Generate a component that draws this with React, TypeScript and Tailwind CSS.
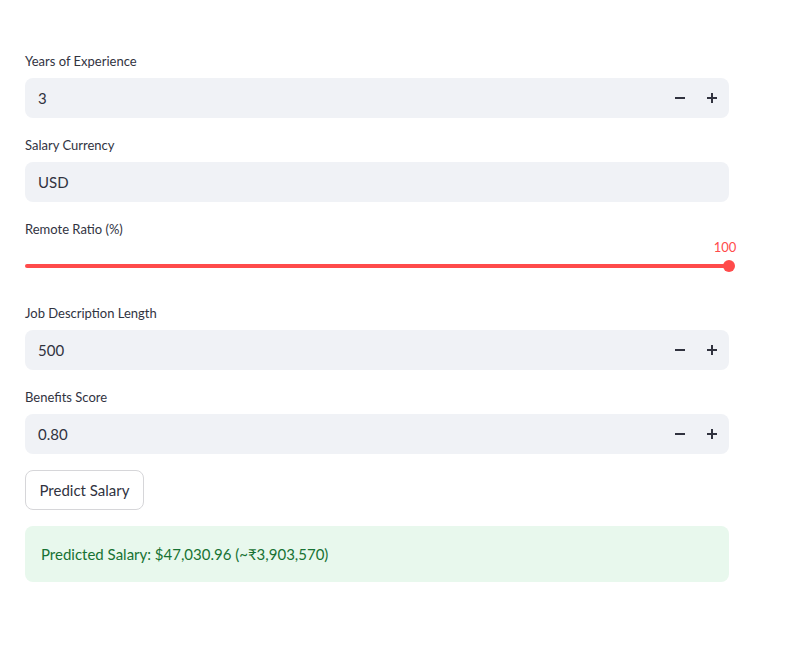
import React, { useState } from "react";

const font = { fontFamily: "Lato, 'Noto Sans', sans-serif" };

const Label: React.FC<{ text: string }> = ({ text }) => (
  <div className="h-6 mb-1 pb-[1px] flex items-center text-[13px] text-[#31333f]">{text}</div>
);

const NumberInput: React.FC<{ label: string; value: string }> = ({ label, value }) => (
  <div>
    <Label text={label} />
    <div className="h-10 rounded-lg bg-[#f0f2f6] flex items-center">
      <span className="flex-1 pl-[13px] text-[15px] text-[#31333f]">{value}</span>
      <button className="w-8 h-10 flex items-center justify-center text-[#31333f]">
        <svg width="10" height="10" viewBox="0 0 10 10">
          <rect x="0" y="4" width="10" height="2" fill="currentColor" />
        </svg>
      </button>
      <button className="w-8 h-10 mr-px flex items-center justify-center text-[#31333f]">
        <svg width="10" height="10" viewBox="0 0 10 10">
          <rect x="0" y="4" width="10" height="2" fill="currentColor" />
          <rect x="4" y="0" width="2" height="10" fill="currentColor" />
        </svg>
      </button>
    </div>
  </div>
);

export default function App() {
  const [ratio] = useState(100);
  return (
    <div className="min-h-screen bg-white" style={font}>
      <div className="w-[704px] ml-[25px] pt-[50px] flex flex-col gap-4">
        <NumberInput label="Years of Experience" value="3" />
        <div>
          <Label text="Salary Currency" />
          <div className="h-10 rounded-lg bg-[#f0f2f6] flex items-center pl-[13px] text-[15px] text-[#31333f]">
            USD
          </div>
        </div>
        <div>
          <Label text="Remote Ratio (%)" />
          <div className="relative h-10">
            <div className="absolute right-[-12px] top-[-7px] w-8 text-center text-[13px] text-[#ff4b4b] leading-4">
              {ratio}
            </div>
            <div className="absolute left-0 right-0 top-[18px] h-1 rounded-full bg-[#ff4b4b]" />
            <div className="absolute right-[-6px] top-[14px] w-3 h-3 rounded-full bg-[#ff4b4b]" />
          </div>
        </div>
        <NumberInput label="Job Description Length" value="500" />
        <NumberInput label="Benefits Score" value="0.80" />
        <div>
          <button className="h-10 w-[119px] rounded-lg border border-[#d6d6d9] bg-white text-[15px] text-[#31333f]">
            Predict Salary
          </button>
        </div>
        <div className="h-[56px] rounded-lg bg-[#e8f8ed] flex items-center px-4 text-[15px] text-[#177233]">
          Predicted Salary: $47,030.96 (~₹3,903,570)
        </div>
      </div>
    </div>
  );
}
